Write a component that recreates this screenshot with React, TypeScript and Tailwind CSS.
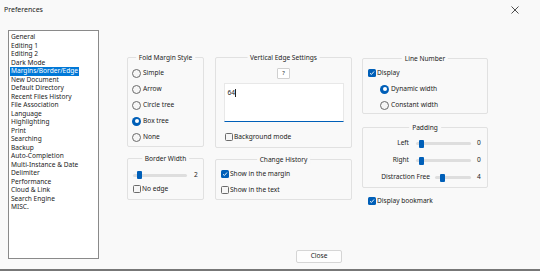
import React from "react";

const categories = [
  "General",
  "Editing 1",
  "Editing 2",
  "Dark Mode",
  "Margins/Border/Edge",
  "New Document",
  "Default Directory",
  "Recent Files History",
  "File Association",
  "Language",
  "Highlighting",
  "Print",
  "Searching",
  "Backup",
  "Auto-Completion",
  "Multi-Instance & Date",
  "Delimiter",
  "Performance",
  "Cloud & Link",
  "Search Engine",
  "MISC.",
];

function Group({ title, className, children }: { title: string; className: string; children: React.ReactNode }) {
  return (
    <div className={`relative border border-[#e1e1e1] rounded-[2px] ${className}`}>
      <span className="absolute -top-[5px] left-1/2 -translate-x-1/2 bg-[#f9f9f9] px-[3px] leading-[9px] whitespace-nowrap">
        {title}
      </span>
      {children}
    </div>
  );
}

function Radio({ checked, label }: { checked?: boolean; label: string }) {
  return (
    <div className="flex items-center h-[16px] gap-[2px]">
      {checked ? (
        <span className="w-[9px] h-[9px] rounded-full bg-[#005fb8] flex items-center justify-center">
          <span className="w-[4px] h-[4px] rounded-full bg-white" />
        </span>
      ) : (
        <span className="w-[9px] h-[9px] rounded-full border border-[#6b6b6b] bg-[#f6f6f6]" />
      )}
      <span>{label}</span>
    </div>
  );
}

function Check({ checked, label }: { checked?: boolean; label: string }) {
  return (
    <div className="flex items-center h-[16px] gap-[1px]">
      {checked ? (
        <span className="w-[8px] h-[8px] rounded-[1.5px] bg-[#005fb8] flex items-center justify-center">
          <svg width="6" height="6" viewBox="0 0 6 6">
            <path d="M1 3.2 L2.4 4.5 L5 1.5" stroke="white" strokeWidth="0.9" fill="none" />
          </svg>
        </span>
      ) : (
        <span className="w-[8px] h-[8px] rounded-[1.5px] border border-[#6b6b6b] bg-[#f6f6f6]" />
      )}
      <span>{label}</span>
    </div>
  );
}

function Slider({ width, pos }: { width: number; pos: number }) {
  return (
    <div className="relative h-[10px] flex items-center" style={{ width }}>
      <div className="w-full h-[3px] bg-[#dedede] rounded-full" />
      <div className="absolute top-[1px] w-[5px] h-[8px] bg-[#005fb8] rounded-[1px]" style={{ left: pos }} />
    </div>
  );
}

export default function App() {
  return (
    <div className="w-[540px] h-[271px] bg-[#f9f9f9] text-[#1b1b1b] text-[6.6px] leading-[8.5px] flex flex-col border-b-2 border-[#777] overflow-hidden" style={{ fontFamily: '"Noto Sans", "Open Sans", sans-serif' }}>
      {/* title bar */}
      <div className="h-[20px] shrink-0 flex items-center justify-between pl-[4px] pr-[21px]">
        <span className="text-[7px]">Preferences</span>
        <svg width="8" height="8" viewBox="0 0 8 8">
          <path d="M0.5 0.5 L7.5 7.5 M7.5 0.5 L0.5 7.5" stroke="#222" strokeWidth="0.8" />
        </svg>
      </div>

      <div className="flex pl-[8px] pt-[10px] shrink-0">
        {/* category list */}
        <div className="w-[91px] h-[229px] border border-[#8a8a8a] bg-white pt-[2px] pl-[1px] flex flex-col items-start">
          {categories.map((c) => (
            <span key={c} className={`px-[1px] h-[8.53px] whitespace-nowrap ${c === "Margins/Border/Edge" ? "bg-[#0078d7] text-white" : ""}`}>
              {c}
            </span>
          ))}
        </div>

        <div className="h-[233px] flex-1 flex flex-col">
          <div className="flex">
            {/* column 1 */}
            <div className="ml-[28px] mt-[27px] w-[77px] flex flex-col gap-[11px]">
              <Group title="Fold Margin Style" className="h-[90px] pt-[7px] pl-[4px]">
                <Radio label="Simple" />
                <Radio label="Arrow" />
                <Radio label="Circle tree" />
                <Radio checked label="Box tree" />
                <Radio label="None" />
              </Group>
              <Group title="Border Width" className="h-[42px] pt-[11px] pl-[5px]">
                <div className="flex items-center">
                  <Slider width={54} pos={4} />
                  <span className="ml-[7px]">2</span>
                </div>
                <div className="mt-[1px]">
                  <Check label="No edge" />
                </div>
              </Group>
            </div>

            {/* column 2 */}
            <div className="ml-[11px] mt-[27px] w-[137px] flex flex-col gap-[11px]">
              <Group title="Vertical Edge Settings" className="h-[91px] pt-[10px] flex flex-col items-center">
                <div className="w-[13px] h-[11px] bg-white border border-[#d0d0d0] rounded-[1px] flex items-center justify-center text-[6px]">?</div>
                <div className="mt-[4px] w-[120px] h-[39px] bg-white border border-[#e8e8e8] border-b-[#005fb8] pl-[3px] pt-[5px] flex items-start">
                  <span>64</span>
                  <span className="w-[1px] h-[8px] bg-[#222]" />
                </div>
                <div className="self-start pl-[9px] mt-[7px]">
                  <Check label="Background mode" />
                </div>
              </Group>
              <Group title="Change History" className="h-[41px] pt-[6px] pl-[5px]">
                <Check checked label="Show in the margin" />
                <Check label="Show in the text" />
              </Group>
            </div>

            {/* column 3 */}
            <div className="ml-[10px] mt-[28px] w-[126px] flex flex-col">
              <Group title="Line Number" className="h-[56px] pt-[6px] pl-[5px]">
                <Check checked label="Display" />
                <div className="pl-[12px]">
                  <Radio checked label="Dynamic width" />
                  <Radio label="Constant width" />
                </div>
              </Group>
              <Group title="Padding" className="mt-[13px] h-[61px] pt-[7px] pr-[6px]">
                <div className="flex items-center justify-end h-[17px]">
                  <span>Left</span>
                  <span className="ml-[7px]"><Slider width={55} pos={3} /></span>
                  <span className="ml-[6px] w-[4px]">0</span>
                </div>
                <div className="flex items-center justify-end h-[17px]">
                  <span>Right</span>
                  <span className="ml-[7px]"><Slider width={55} pos={3} /></span>
                  <span className="ml-[6px] w-[4px]">0</span>
                </div>
                <div className="flex items-center justify-end h-[17px]">
                  <span>Distraction Free</span>
                  <span className="ml-[5px]"><Slider width={36} pos={5} /></span>
                  <span className="ml-[6px] w-[4px]">4</span>
                </div>
              </Group>
              <div className="pl-[6px] mt-[5px]">
                <Check checked label="Display bookmark" />
              </div>
            </div>
          </div>

          {/* footer */}
          <div className="mt-auto flex justify-center pr-[1px]">
            <div className="w-[46px] h-[13px] bg-[#fdfdfd] border border-[#d5d5d5] rounded-[2px] flex items-center justify-center">
              Close
            </div>
          </div>
        </div>
      </div>
    </div>
  );
}
